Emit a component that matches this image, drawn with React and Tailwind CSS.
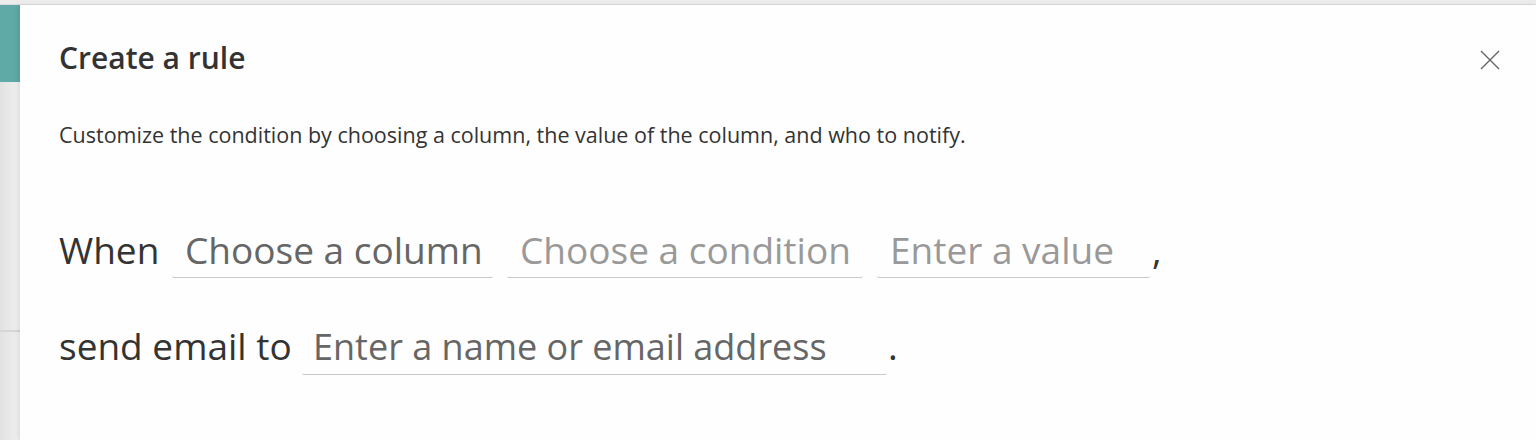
import React from "react";

const font = { fontFamily: '"Open Sans", "Noto Sans", sans-serif' };

function Field({ text, width, color, pl = "pl-[13px]", size = "" }) {
  return (
    <div className={`${width} border-b border-[#c8c8c8] ${pl} leading-none pb-[9px] rounded-b-[2px]`}>
      <span className={`${color} ${size} whitespace-nowrap`}>{text}</span>
    </div>
  );
}

export default function App() {
  return (
    <div className="w-[1536px] h-[440px] flex flex-col bg-white overflow-hidden" style={font}>
      <div className="h-[5px] shrink-0 bg-[#ececec] border-b border-[#dcdcdc]" />
      <div className="flex flex-1 min-h-0">
        <div className="w-[20px] shrink-0 flex flex-col">
          <div className="h-[77px] bg-[#5fa9a6]" />
          <div className="flex-1 bg-gradient-to-r from-[#e2e2e2] to-[#f0f0f0] flex flex-col">
            <div className="h-[248px]" />
            <div className="h-[2px] bg-[#d6d6d6]" />
          </div>
        </div>
        <div className="flex-1 relative bg-[#fefefe] shadow-[-2px_0_4px_rgba(0,0,0,0.08)] pl-[39px] pt-[31px]">
          <button className="absolute right-[35px] top-[44px] w-[22px] h-[22px] flex items-center justify-center text-[#666]">
            <svg width="20" height="20" viewBox="0 0 20 20" fill="none" stroke="currentColor" strokeWidth="1.4">
              <path d="M1 1 L19 19 M19 1 L1 19" />
            </svg>
          </button>
          <h1 className="text-[30px] font-semibold text-[#333] leading-[44px]">Create a rule</h1>
          <p className="mt-[41px] text-[21.5px] text-[#333] leading-[28px]">
            Customize the condition by choosing a column, the value of the column, and who to notify.
          </p>
          <div className="mt-[82px] flex items-baseline text-[37px] leading-none">
            <span className="text-[#333] w-[113px]">When</span>
            <Field text="Choose a column" width="w-[321px]" color="text-[#666]" />
            <div className="w-[14px]" />
            <Field text="Choose a condition" width="w-[356px]" color="text-[#999]" />
            <div className="w-[14px]" />
            <Field text="Enter a value" width="w-[273px]" color="text-[#999]" />
            <span className="text-[#333] ml-[2px]">,</span>
          </div>
          <div className="mt-[49px] flex items-baseline text-[37px] leading-none">
            <span className="text-[#333] w-[243px]">send email to</span>
            <Field text="Enter a name or email address" width="w-[585px]" color="text-[#666]" pl="pl-[11px]" size="text-[36px]" />
            <span className="text-[#333] ml-[1px]">.</span>
          </div>
        </div>
      </div>
    </div>
  );
}
